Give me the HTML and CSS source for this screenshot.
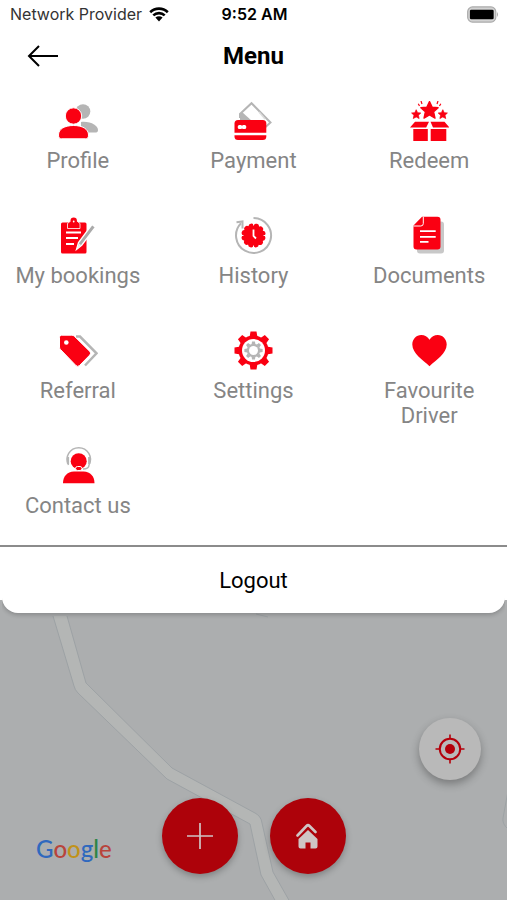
FILE: index.html
```html
<!DOCTYPE html>
<html lang="en">
<head>
<meta charset="utf-8">
<meta name="viewport" content="width=device-width, initial-scale=1">
<title>Menu</title>
<link rel="stylesheet" href="styles.css">
</head>
<body>
<div class="status">
  <div class="carrier">
    <span>Network Provider</span>
    <svg class="wifi" viewBox="0 0 20 15" aria-hidden="true"><path d="M1.200 5.200a12.600 12.600 0 0 1 17.600 0M4.300 8.400a8.200 8.200 0 0 1 11.400 0" fill="none" stroke="#000" stroke-width="2.600"/><path d="M6.400 10.600a5.200 5.200 0 0 1 7.200 0L10 14.400z"/></svg>
  </div>
  <time>9:52 AM</time>
  <svg class="battery" viewBox="0 0 33 17" aria-hidden="true"><rect x=".7" y=".7" width="29" height="15.600" rx="5" fill="#d2d2d2" stroke="#aaa" stroke-width="1.200"/><rect x="3" y="3.500" width="24.500" height="10" rx="1.500"/><path d="M31 6v5q2-2.500 0-5z" fill="#aaa"/></svg>
</div>
<header class="header">
  <button class="back" aria-label="Back"><svg viewBox="0 0 32 24" aria-hidden="true"><path d="M31 12H2M12 2 2 12l10 10" fill="none" stroke="#000" stroke-width="2"/></svg></button>
  <h1>Menu</h1>
</header>
<nav class="menu" aria-label="Menu">
  <a href="#profile"><svg viewBox="0 0 40 40" aria-hidden="true"><circle class="g" cx="25" cy="10.500" r="7.300"/><path class="g" d="M23 21c10-1 17 4 17 8 0 2-1 2.500-3 2.500H23z"/><circle class="r o" cx="15.500" cy="15" r="8.200"/><path class="r o" d="M.5 34c0-6 6-9.500 15-9.500s15 3.500 15 9.500c0 3-1 3.800-3 3.800h-24c-2 0-3-.8-3-3.800z"/></svg>Profile</a>
  <a href="#payment"><svg viewBox="0 0 40 40" aria-hidden="true"><path d="M7 17v-4L18.500 2.200 37.500 21.500l-5 4.500" fill="none" stroke="#b5b5b5" stroke-width="2"/><path class="g" d="m9 11 10 9H7v-7z"/><path d="m26 11 6 7" stroke="#ddd" stroke-width="1.500"/><rect class="r" x="1.500" y="19" width="31.800" height="20" rx="3.500"/><path d="M1 33h33" stroke="#fff" stroke-width="2.400"/><rect x="4.800" y="24" width="4.400" height="4" rx="1.500" fill="#fff"/><rect x="8.800" y="24" width="4.400" height="4" rx="1.500" fill="#fff"/></svg>Payment</a>
  <a href="#redeem"><svg viewBox="0 0 40 40" aria-hidden="true"><defs><path id="star" d="m0-10 2.900 6.200 6.700.7-5 4.600 1.500 6.900L0 5-6.100 8.400l1.500-6.900-5-4.600 6.700-.7z" stroke="#fa0012" stroke-width="1.500" stroke-linejoin="round"/></defs><use class="r" href="#star" transform="translate(20.500 9.500) scale(.9)"/><use class="r" href="#star" transform="translate(7.200 13.500) scale(.48)"/><use class="r" href="#star" transform="translate(33.800 13.500) scale(.48)"/><path d="M10.500 5 9.300 2.800M13 3 12 0M28 3l1-3M30.500 5l1.300-2.200" stroke="#fa0012" stroke-width="1.200"/><path class="r" d="M6 20.800h14L17.200 26.500H1zM21.500 20.800h14l5 5.700H24zM4.300 28h14.500v12H4.300zM21.700 28h15.600v12H21.700z"/></svg>Redeem</a>
  <a href="#bookings"><svg viewBox="0 0 40 40" aria-hidden="true"><rect class="r" x="3" y="6.500" width="25.500" height="31" rx="1.500"/><path class="r" d="M9.500 12.500v-5l2.500-2h.5a3.500 3.500 0 0 1 6.500 0h.5l2.500 2v5z" stroke="#fff" stroke-width=".8"/><circle class="r" cx="15.700" cy="4.800" r="3.200"/><circle cx="15.700" cy="5.500" r=".9" fill="#fff"/><path d="M8 16.500h15M8 22h12M8 28h8" stroke="#fff" stroke-width="1.800"/><path d="m18.500 33.500 2-7L34 8.500l3.500 2.700-13.800 18z" fill="#aaa" stroke="#fff" stroke-width="1.300"/><path d="m19.200 32.500 1.800-5 2.300 1.700z" fill="#eee"/></svg>My bookings</a>
  <a href="#history"><svg viewBox="0 0 40 40" aria-hidden="true"><path d="M20.500 2A17.500 17.500 0 1 1 8 7.300" fill="none" stroke="#b5b5b5" stroke-width="2"/><path d="M3.500 6.300 9.500 5.500v7" fill="none" stroke="#b5b5b5" stroke-width="2"/><circle cx="20.500" cy="19.500" r="10.500" fill="#fa0012"/><circle cx="20.500" cy="19.500" r="9.500" fill="none" stroke="#fa0012" stroke-width="5.400" stroke-linecap="round" stroke-dasharray="0.010 4.964" transform="rotate(15 20.500 19.500)"/><path d="M20.500 7v2.500M20.500 29.500V32M8 19.500h2.500M30.500 19.500H33" stroke="#fff" stroke-width=".9"/><path d="M20.500 13.500v6.500l2.500 2.500" fill="none" stroke="#fff" stroke-width="1.800"/></svg>History</a>
  <a href="#documents"><svg viewBox="0 0 40 40" aria-hidden="true"><rect class="g" x="8" y="5.500" width="27" height="32" rx="3" opacity=".75"/><path class="r" d="M13 .8h15.500a3 3 0 0 1 3 3v26.700a3 3 0 0 1-3 3h-21a3 3 0 0 1-3-3V9.500z"/><path d="M4.500 10h7.300a2.500 2.500 0 0 0 2.500-2.500V.8" fill="none" stroke="#fff" stroke-width="1"/><path d="M11 15.200h15.700M11 20.800h15.700M11 25.800h8.500" stroke="#fff" stroke-width="1.800"/></svg>Documents</a>
  <a href="#referral"><svg viewBox="0 0 40 40" aria-hidden="true"><path d="M18 5.500h4L38.500 22.300 27 34.500" fill="none" stroke="#b5b5b5" stroke-width="2.500"/><path class="r o" d="M3.500 4.200h10.300q1.500 0 2.500 1l15.500 15.200q1.800 1.800 0 3.600L21.500 34.500q-1.800 1.800-3.600 0L2.500 18.500q-1-1-1-2.500V6.200q0-2 2-2z"/><circle cx="8.300" cy="11.500" r="2.300" fill="#fff"/></svg>Referral</a>
  <a href="#settings"><svg viewBox="0 0 40 40" aria-hidden="true"><defs><path id="gear" d="M-4-13-3-19h6l1 6zM-4 13-3 19h6l1-6zM-13-4-19-3v6l6 1zM13-4 19-3v6l-6 1z"/></defs><g transform="translate(20.500 19.500)"><g class="r"><use href="#gear"/><use href="#gear" transform="rotate(45)"/><circle r="15"/></g><circle r="11.500" fill="#fff"/><g class="g" transform="scale(.48)"><use href="#gear"/><use href="#gear" transform="rotate(45)"/><circle r="14"/></g><circle r="4.500" fill="#fff"/></g></svg>Settings</a>
  <a href="#favourite"><svg viewBox="0 0 40 40" aria-hidden="true"><path class="r" d="M20.500 35.200C14 29 3.300 22.500 3.300 13.500c0-5.200 4-9.400 8.900-9.400 3.500 0 6.500 1.700 8.300 4.600 1.800-2.900 4.800-4.600 8.300-4.600 4.900 0 8.900 4.200 8.900 9.400 0 9-10.700 15.500-17.200 21.700z"/></svg>Favourite Driver</a>
  <a href="#contact"><svg viewBox="0 0 40 40" aria-hidden="true"><path d="M10.500 19a11.700 11.700 0 1 1 20.500 0q0 4-6 4" fill="none" stroke="#b5b5b5" stroke-width="1.500"/><path d="M10 11v7M31.200 11v7" stroke="#b5b5b5" stroke-width="2.200"/><circle class="r" cx="20.700" cy="15.200" r="8"/><rect class="r" x="17.500" y="20.500" width="6.500" height="4" rx="2" stroke="#fff" stroke-width="1"/><path class="r" d="M5 37.300c0-7 4-11.500 11-11.800h9.500c7 .3 11 4.800 11 11.800z"/></svg>Contact us</a>
</nav>
<button class="logout">Logout</button>
<main class="map">
  <svg class="roads" viewBox="0 0 507 300" preserveAspectRatio="xMidYMin slice" aria-hidden="true">
    <path d="M53 16 74 86q1 4 4 7L167 179 250 224 261 275 276 302h14L273 272 262 223q-1-7-7-10L172 168 86 83 67 16z" fill="#b4b6b5"/>
    <path d="M53 16 74 86q1 4 4 7L167 179 250 224 261 275 276 302M290 302 273 272 262 223q-1-7-7-10L172 168 86 83 67 16M256 14l12 3M508 191l-5 27q-1 6 5 11" fill="none" stroke="#9da2a5"/>
  </svg>
  <button class="locate" aria-label="My location"><svg viewBox="0 0 30 30" aria-hidden="true"><circle cx="15" cy="15" r="10.200" fill="none" stroke="#b4000b" stroke-width="2"/><circle cx="15" cy="15" r="5" fill="#b4000b"/><path d="M15 .5V5M15 25v4.500M.5 15H5M25 15h4.500" stroke="#b4000b" stroke-width="1.600"/></svg></button>
  <div class="actions">
    <div class="google"><span class="blue">G</span><span class="red">o</span><span class="yellow">o</span><span class="blue">g</span><span class="green">l</span><span class="red">e</span></div>
    <button class="fab" aria-label="Add"><svg viewBox="0 0 26 26" aria-hidden="true"><path d="M13 0v26M0 13h26" stroke="#cfc5c5" stroke-width="1.700"/></svg></button>
    <button class="fab" aria-label="Home"><svg viewBox="0 0 26 26" aria-hidden="true"><path d="M2.500 12.500 11.500 3q1.500-1.500 3 0l6 6" fill="none" stroke="#cfc5c5" stroke-width="2.600" stroke-linecap="round"/><path d="m13 7 9.500 9v7.500q0 2-2 2h-5v-6h-5v6h-5q-2 0-2-2V16z" fill="#cfc5c5"/></svg></button>
  </div>
</main>
</body>
</html>
```
FILE: styles.css
```css
* { box-sizing: border-box; }
body {
  margin: 0;
  min-height: 100vh;
  display: flex;
  flex-direction: column;
  background: #fff;
  color: #000;
  font-family: Roboto, "Liberation Sans", sans-serif;
}
button {
  border: 0;
  padding: 0;
  background: none;
  color: inherit;
  font: inherit;
  cursor: pointer;
}
svg { display: block; }
.status {
  display: grid;
  grid-template-columns: 1fr auto 1fr;
  align-items: center;
  height: 28px;
  padding: 0 8px 0 10px;
  font: 500 16px Inter, sans-serif;
}
.carrier {
  display: flex;
  align-items: center;
  gap: 7px;
  font-weight: 400;
  color: #333;
  white-space: nowrap;
}
.status time { font-weight: 600; }
.wifi { width: 20px; height: 15px; }
.battery { width: 32px; height: 17px; justify-self: end; }
.header {
  display: grid;
  grid-template-columns: 1fr auto 1fr;
  align-items: center;
  height: 56px;
  padding: 0 27px;
}
.back { justify-self: start; }
.back svg { width: 32px; height: 24px; }
.header h1 {
  margin: 0;
  font-size: 24px;
  line-height: 28px;
  font-weight: 700;
}
.menu {
  display: grid;
  grid-template-columns: repeat(3, 1fr);
  grid-auto-rows: minmax(97px, auto);
  gap: 18px 20px;
  padding: 17px 0 2px;
  border-bottom: 2px solid #8b8b8b;
}
.menu a {
  display: flex;
  flex-direction: column;
  align-items: center;
  padding: 0 12px;
  color: #858585;
  font-size: 22px;
  line-height: 25px;
  text-align: center;
  text-decoration: none;
}
.menu a svg { width: 40px; height: 40px; margin-bottom: 7px; }
.r { fill: #fa0012; }
.g { fill: #b5b5b5; }
.o { stroke: #fff; stroke-width: 1; }
.logout {
  position: relative;
  z-index: 1;
  height: 66px;
  margin: 0 2px;
  border-radius: 0 0 16px 16px;
  background: #fff;
  font-size: 22px;
  box-shadow: 0 2px 4px rgba(0, 0, 0, .2);
  clip-path: inset(0 0 -8px);
}
.map {
  position: relative;
  flex: 1;
  display: flex;
  flex-direction: column;
  justify-content: flex-end;
  gap: 18px;
  margin-top: -13px;
  padding: 118px 26px 26px;
  background: #acaeaf;
  overflow: hidden;
}
.roads { position: absolute; inset: 0; width: 100%; height: 100%; }
.locate {
  position: relative;
  align-self: flex-end;
  display: grid;
  place-items: center;
  width: 62px;
  height: 62px;
  border-radius: 50%;
  background: #b9b9b9;
  box-shadow: 0 4px 8px rgba(0, 0, 0, .3);
}
.locate svg { width: 30px; height: 30px; }
.actions {
  position: relative;
  display: flex;
  justify-content: center;
  gap: 32px;
}
.fab {
  display: grid;
  place-items: center;
  width: 76px;
  height: 76px;
  border-radius: 50%;
  background: #ad020a;
  box-shadow: 0 3px 6px rgba(0, 0, 0, .25);
}
.fab svg { width: 26px; height: 26px; }
.google {
  position: absolute;
  left: 10px;
  bottom: 10px;
  font: 500 24px/30px Lato, sans-serif;
}
.blue { color: #3069be; }
.red { color: #b8443b; }
.yellow { color: #c0921a; }
.green { color: #2d8547; }
```
